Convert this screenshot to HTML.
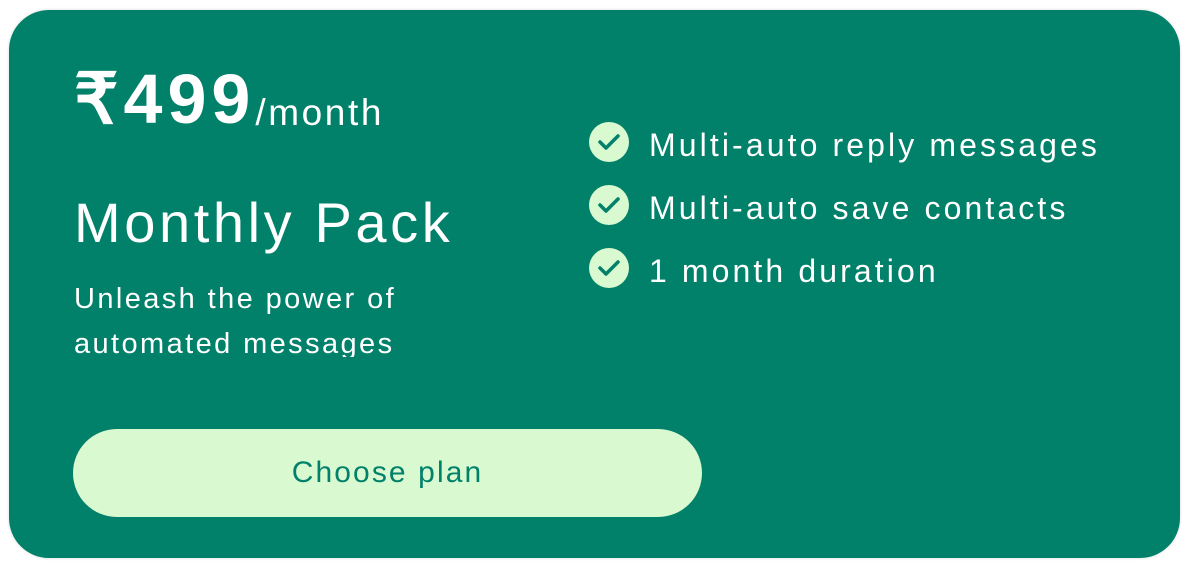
<!DOCTYPE html>
<html><head><style>
body{margin:0;width:1189px;height:567px;background:#fff;font-family:"Liberation Sans",sans-serif;overflow:hidden}
.card{position:absolute;left:9px;top:10px;width:1171px;height:548px;background:#01806a;border-radius:40px;box-shadow:0 0 3px rgba(0,0,0,.15)}
.t{position:absolute;color:#fff;white-space:nowrap}
.price{left:65px;top:48px;font-size:70px;font-weight:bold;letter-spacing:5px}
.price span{font-size:37px;font-weight:normal;letter-spacing:2.6px;margin-left:0px;position:relative;top:2px}
.title{left:65px;top:180px;font-size:56px;letter-spacing:3.6px}
.desc{left:65px;top:267px;font-size:29px;line-height:45px;letter-spacing:2.4px;height:80px;overflow:hidden}
.btn{position:absolute;left:64px;top:419px;width:629px;height:88px;border-radius:44px;background:#d9fad0;color:#01806a;font-size:30px;text-align:center;line-height:88px;letter-spacing:2.1px}
.f{position:absolute;left:580px;height:40px;display:flex;align-items:center;color:#fff;font-size:32px;letter-spacing:3.1px}
.f span{position:relative;top:3px}
.f svg{margin-right:20px}
</style></head><body>
<div class="card">
<div class="t price">₹499<span>/month</span></div>
<div class="t title">Monthly Pack</div>
<div class="t desc">Unleash the power of<br>automated messages</div>
<div class="f" style="top:112px"><svg width="40" height="40"><circle cx="20" cy="20" r="20" fill="#d9fad0"/><path d="M11 20l6 6 12-12" stroke="#01806a" stroke-width="3.5" fill="none" stroke-linecap="round" stroke-linejoin="round"/></svg><span>Multi-auto reply messages</span></div>
<div class="f" style="top:175px"><svg width="40" height="40"><circle cx="20" cy="20" r="20" fill="#d9fad0"/><path d="M11 20l6 6 12-12" stroke="#01806a" stroke-width="3.5" fill="none" stroke-linecap="round" stroke-linejoin="round"/></svg><span>Multi-auto save contacts</span></div>
<div class="f" style="top:238px"><svg width="40" height="40"><circle cx="20" cy="20" r="20" fill="#d9fad0"/><path d="M11 20l6 6 12-12" stroke="#01806a" stroke-width="3.5" fill="none" stroke-linecap="round" stroke-linejoin="round"/></svg><span>1 month duration</span></div>
<div class="btn">Choose plan</div>
</div>
</body></html>
